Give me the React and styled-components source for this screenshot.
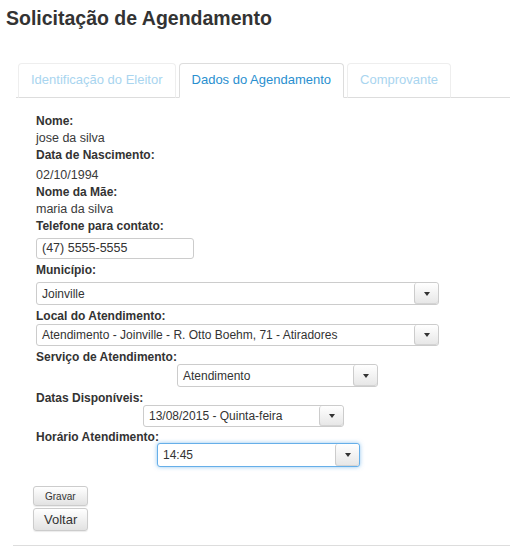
import React from 'react';
import styled, { createGlobalStyle } from 'styled-components';

const GlobalStyle = createGlobalStyle`
  body {
    margin: 0;
    background: #fff;
    font-family: "Liberation Sans", Arial, sans-serif;
    color: #333;
  }
`;

const Page = styled.div`
  padding-left: 6px;
  padding-top: 7px;
`;

const Title = styled.h1`
  margin: 0;
  font-size: 19.5px;
  font-weight: bold;
  color: #333;
  line-height: normal;
`;

const TabList = styled.ul`
  display: flex;
  margin: 33px 0 0 10px;
  padding: 0 0 0 2px;
  list-style: none;
  border-bottom: 1px solid #ddd;
`;

const Tab = styled.li`
  margin: 0 3px -1px 0;
  padding: 8px 12px 10px;
  font-size: 13px;
  line-height: 15px;
  border: 1px solid ${p => (p.$active ? '#ddd' : '#eee')};
  border-bottom-color: ${p => (p.$active ? '#fff' : '#ddd')};
  border-radius: 4px 4px 0 0;
  color: ${p => (p.$active ? '#2a8fcf' : '#a9d5ef')};
  background: #fff;
`;

const Content = styled.div`
  padding: 15px 0 0 30px;
  font-size: 12px;
`;

const Label = styled.div`
  font-weight: bold;
  line-height: 17px;
  margin-top: ${p => p.$mt || 0}px;
`;

const Value = styled.div`
  font-size: 12.5px;
  line-height: 17px;
  color: #3a3a3a;
  padding-top: ${p => p.$pt || 0}px;
`;

const TextInput = styled.div`
  box-sizing: border-box;
  width: 158px;
  height: 21px;
  margin-top: 3px;
  padding: 0 5px;
  border: 1px solid #ccc;
  border-radius: 3px;
  font-size: 12.5px;
  line-height: 19px;
  background: #fff;
`;

const SelectBox = styled.div`
  box-sizing: border-box;
  display: flex;
  width: ${p => p.$width}px;
  height: ${p => p.$height}px;
  margin-top: ${p => p.$mt}px;
  margin-left: ${p => p.$indent || 0}px;
  border: 1px solid ${p => (p.$focus ? '#66afe9' : '#ccc')};
  border-radius: 3px;
  background: #fff;
  box-shadow: ${p => (p.$focus ? '0 0 4px rgba(102, 175, 233, 0.7)' : 'none')};
  overflow: hidden;
`;

const SelectValue = styled.div`
  flex: 1;
  padding-left: 5px;
  font-size: 12px;
  display: flex;
  align-items: center;
  white-space: nowrap;
`;

const SelectButton = styled.div`
  width: 23px;
  display: flex;
  align-items: center;
  justify-content: center;
  border-left: 1px solid #ccc;
  border-radius: 3px;
  background: linear-gradient(#fff, #e6e6e6);
  box-shadow: inset 0 -1px 0 #d4d4d4;
`;

const Caret = styled.span`
  width: 0;
  height: 0;
  border-left: 3px solid transparent;
  border-right: 3px solid transparent;
  border-top: 4px solid #333;
`;

const Button = styled.button`
  display: block;
  box-sizing: border-box;
  margin: ${p => p.$mt}px 0 0 -3px;
  height: ${p => p.$height}px;
  padding: 0 ${p => p.$px}px;
  font-family: "Liberation Sans", Arial, sans-serif;
  font-size: ${p => p.$size}px;
  color: #333;
  border: 1px solid #ccc;
  border-radius: 3px;
  background: linear-gradient(#fff, #e2e2e2);
  box-shadow: 0 1px 1px rgba(0, 0, 0, 0.08);
`;

const Rule = styled.hr`
  margin: 14px 0 0 7px;
  border: 0;
  border-top: 1px solid #ddd;
`;

function Select({ value, width, height, mt, indent, focus }) {
  return (
    <SelectBox $width={width} $height={height} $mt={mt} $indent={indent} $focus={focus}>
      <SelectValue>{value}</SelectValue>
      <SelectButton>
        <Caret />
      </SelectButton>
    </SelectBox>
  );
}

export default function App() {
  return (
    <>
      <GlobalStyle />
      <Page>
        <Title>Solicitação de Agendamento</Title>
        <TabList>
          <Tab>Identificação do Eleitor</Tab>
          <Tab $active>Dados do Agendamento</Tab>
          <Tab>Comprovante</Tab>
        </TabList>
        <Content>
          <Label>Nome:</Label>
          <Value>jose da silva</Value>
          <Label>Data de Nascimento:</Label>
          <Value $pt={3}>02/10/1994</Value>
          <Label>Nome da Mãe:</Label>
          <Value>maria da silva</Value>
          <Label>Telefone para contato:</Label>
          <TextInput>(47) 5555-5555</TextInput>

          <Label $mt={3}>Município:</Label>
          <Select value="Joinville" width={403} height={23} mt={3} />
          <Label $mt={3}>Local do Atendimento:</Label>
          <Select value="Atendimento - Joinville - R. Otto Boehm, 71 - Atiradores" width={403} height={22} mt={-1} />
          <Label $mt={3}>Serviço de Atendimento:</Label>
          <Select value="Atendimento" width={201} height={23} mt={-2} indent={141} />
          <Label $mt={3}>Datas Disponíveis:</Label>
          <Select value="13/08/2015 - Quinta-feira" width={201} height={22} mt={-2} indent={107} />
          <Label $mt={2}>Horário Atendimento:</Label>
          <Select value="14:45" width={203} height={24} mt={-3} indent={121} focus />

          <Button $mt={19} $height={20} $px={11} $size={10}>Gravar</Button>
          <Button $mt={2} $height={23} $px={10} $size={13}>Voltar</Button>
        </Content>
        <Rule />
      </Page>
    </>
  );
}
